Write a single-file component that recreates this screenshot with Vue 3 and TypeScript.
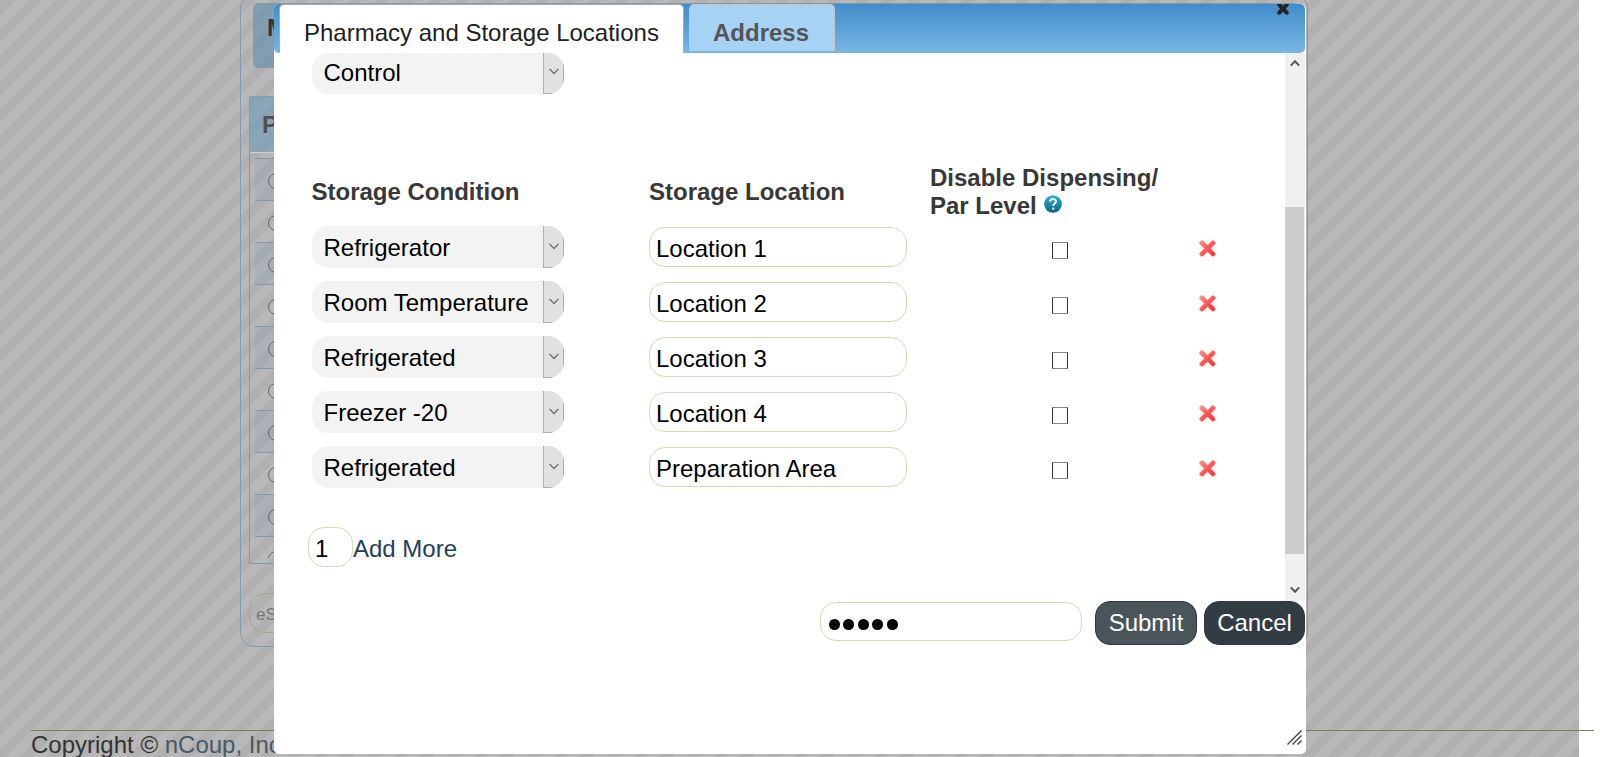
<script setup lang="ts">
import { ref } from 'vue'

interface StorageRow {
  condition: string
  location: string
}

const rows = ref<StorageRow[]>([
  { condition: 'Refrigerator', location: 'Location 1' },
  { condition: 'Room Temperature', location: 'Location 2' },
  { condition: 'Refrigerated', location: 'Location 3' },
  { condition: 'Freezer -20', location: 'Location 4' },
  { condition: 'Refrigerated', location: 'Preparation Area' },
])
const addCount = ref('1')
const removeRow = (index: number) => rows.value.splice(index, 1)
</script>

<template>
  <div class="page">
    <div class="backdrop"></div>

    <section class="panel">
      <h1 class="panel-title">M</h1>
      <div class="list">
        <div class="list-head">P</div>
        <div class="list-body">
          <div v-for="n in 10" :key="n" class="list-row"><span class="radio"></span></div>
        </div>
      </div>
      <div class="sign">eS</div>
    </section>

    <footer class="footer">Copyright © <a>nCoup, Inc</a></footer>

    <div class="dialog">
      <header class="tabs">
        <div class="tab active">Pharmacy and Storage Locations</div>
        <div class="tab">Address</div>
        <svg class="close" width="12" height="11" viewBox="0 0 12 11">
          <path d="M2.3 .8L9.7 8.7M9.7 .8L2.3 8.7" stroke="#222" stroke-width="4" stroke-linecap="round" />
        </svg>
      </header>

      <div class="body">
        <div class="content">
          <div class="select">
            <span class="value">Control</span>
            <span class="arrow"><svg width="10" height="7" viewBox="0 0 10 7"><path d="M.6 1L5 5.5L9.4 1" /></svg></span>
          </div>

          <div class="grid head">
            <div>Storage Condition</div>
            <div>Storage Location</div>
            <div>
              Disable Dispensing/<br />Par Level
              <svg class="help" width="18" height="18" viewBox="0 0 18 18">
                <defs>
                  <linearGradient id="helpFill" x1="0" y1="0" x2="0" y2="1">
                    <stop offset="0" stop-color="#2db2d8" />
                    <stop offset="1" stop-color="#0b6084" />
                  </linearGradient>
                </defs>
                <circle cx="9" cy="9" r="8.8" fill="url(#helpFill)" />
                <path d="M6 6.6C6.2 3.3 12 3.3 12 6.5C12 8.6 9.2 8.6 9.2 11" fill="none" stroke="#fff" stroke-width="2" />
                <circle cx="9.2" cy="13.6" r="1.2" fill="#fff" />
              </svg>
            </div>
          </div>

          <div v-for="(row, i) in rows" :key="i" class="grid row">
            <div class="select">
              <span class="value">{{ row.condition }}</span>
              <span class="arrow"><svg width="10" height="7" viewBox="0 0 10 7"><path d="M.6 1L5 5.5L9.4 1" /></svg></span>
            </div>
            <input v-model="row.location" class="field location" type="text" />
            <span class="check"></span>
            <svg class="remove" width="17" height="17" viewBox="0 0 17 17" @click="removeRow(i)">
              <defs>
                <linearGradient id="crossFill" gradientUnits="userSpaceOnUse" x1="0" y1="0" x2="17" y2="17">
                  <stop offset="0" stop-color="#ff9a9a" />
                  <stop offset=".5" stop-color="#fa5558" />
                  <stop offset="1" stop-color="#f22a30" />
                </linearGradient>
              </defs>
              <path d="M3 3L14 14M14 3L3 14" stroke="#ff8c8c" stroke-width="5.2" stroke-linecap="round" />
              <path d="M3 3L14 14M14 3L3 14" stroke="url(#crossFill)" stroke-width="3.8" stroke-linecap="round" />
            </svg>
          </div>

          <div class="add">
            <input v-model="addCount" class="field count" type="text" /><a>Add More</a>
          </div>
        </div>

        <div class="scrollbar">
          <svg width="10" height="8" viewBox="0 0 10 8"><path d="M.8 6.6L5 2.2L9.2 6.6" /></svg>
          <div class="thumb"></div>
          <svg width="10" height="8" viewBox="0 0 10 8"><path d="M.8 1.4L5 5.8L9.2 1.4" /></svg>
        </div>
      </div>

      <div class="actions">
        <div class="field password"><i v-for="n in 5" :key="n"></i></div>
        <button class="submit">Submit</button>
        <button class="cancel">Cancel</button>
      </div>

      <svg class="grip" width="15" height="15" viewBox="0 0 15 15">
        <path d="M.5 14.5L14.5 .5M5.5 14.5L14.5 5.5M10.5 14.5L14.5 10.5" stroke="#444" stroke-width="1.4" />
      </svg>
    </div>
  </div>
</template>

<style>
body {
  overflow: hidden;
}
</style>

<style scoped>
* {
  box-sizing: border-box;
}
.page {
  position: relative;
  width: 1600px;
  height: 757px;
  overflow: hidden;
  background: #fff;
  color: #333;
  font: 24px/28px "Liberation Sans", Arial, sans-serif;
}
.backdrop {
  position: absolute;
  inset: 0 21px 0 0;
  background: repeating-linear-gradient(135deg, #b8b8b8 0 1.6px, #b0b0b0 2.8px 10.4px, #b8b8b8 11.6px 18.86px);
}
.panel {
  position: absolute;
  left: 240px;
  top: -6px;
  width: 1068px;
  height: 653px;
  padding: 9px 8px 0;
  border: 1px solid #7f9bae;
  border-radius: 14px;
}
.panel-title {
  width: 1046px;
  height: 65px;
  margin: -1px 0 28px 4px;
  padding: 11px 14px;
  border-radius: 5px;
  background: rgba(85, 135, 170, 0.52);
  font-size: 24px;
}
.list {
  height: 468px;
  overflow: hidden;
  border: 1px solid #7f9bae;
}
.list-head {
  height: 56px;
  padding: 14px 12px;
  background: rgba(90, 145, 185, 0.48);
  border-bottom: 1px solid #d0d0d0;
  color: #505050;
  font-weight: bold;
}
.list-body {
  height: 405px;
  padding: 5px;
  overflow: hidden;
}
.list-row {
  height: 42px;
  padding: 14px 13px;
  border-top: 1px solid #7f9bae;
}
.list-row:nth-child(odd) {
  background: rgba(140, 165, 180, 0.32);
}
.radio {
  display: block;
  width: 16px;
  height: 16px;
  border: 1px solid #666;
  border-radius: 50%;
}
.sign {
  height: 40px;
  margin-top: 29px;
  padding: 7px 6px;
  border: 1px solid #a5a68e;
  border-radius: 16px;
  color: #777;
  font-size: 17px;
}
.footer {
  position: absolute;
  left: 31px;
  right: 6px;
  top: 730px;
  border-top: 1px solid #7b7d5b;
}
.footer a {
  color: #485965;
}
.dialog {
  position: absolute;
  left: 274px;
  top: 4px;
  width: 1032px;
  height: 750px;
  padding-right: 1px;
  border-radius: 5px;
  background: #fff;
}
.tabs {
  position: relative;
  display: flex;
  gap: 5px;
  height: 49px;
  padding-left: 5px;
  border-radius: 5px;
  background: linear-gradient(#418dc9, #78b5e3);
}
.tab {
  height: 47px;
  padding: 14px 25px 0 23px;
  border: 1px solid #c5c5c5;
  border-bottom: 0;
  border-radius: 5px 5px 0 0;
  background: #a6d2f4;
  color: #555;
  font-weight: bold;
}
.tab.active {
  width: 405px;
  height: 49px;
  padding: 14px 0 0 24px;
  border-color: #aaa;
  background: #fff;
  color: #212121;
  font-weight: normal;
  white-space: nowrap;
}
.close {
  position: absolute;
  right: 16px;
  top: 0;
}
.body {
  display: flex;
  height: 548px;
}
.content {
  flex: 1;
  padding-left: 38px;
}
.select {
  display: flex;
  width: 252px;
  height: 42px;
  border-radius: 16px;
  overflow: hidden;
  background: #f3f3f3;
  color: #000;
}
.content > .select {
  height: 41px;
}
.value {
  flex: 1;
  padding: 8px 0 0 11.5px;
  white-space: nowrap;
}
.content > .select .value {
  padding-top: 6px;
}
.arrow {
  display: flex;
  justify-content: center;
  width: 21px;
  padding-top: 16.5px;
  border: 1px solid #adadad;
  border-width: 0 1px 1px;
  background: #e1e1e1;
}
.content > .select .arrow {
  padding-top: 15px;
}
.arrow svg {
  fill: none;
  stroke: #707070;
  stroke-width: 1.3;
}
.grid {
  display: grid;
  grid-template-columns: 337px 281px 239px 60px;
  align-items: center;
}
.head {
  margin-top: 70px;
  color: #383838;
  font-weight: bold;
  white-space: nowrap;
}
.head > :first-child {
  margin-left: -0.5px;
}
.help {
  margin-left: 1px;
  vertical-align: 1px;
}
.row {
  height: 55px;
}
.row .select {
  margin-top: -1px;
}
.field {
  height: 40px;
  margin: 0;
  padding: 4px 6px 0;
  border: 1px solid #d8d9b8;
  border-radius: 16px;
  background: #fff;
  color: #000;
  font: inherit;
}
.location {
  width: 258px;
  margin-top: -1px;
}
.check {
  width: 16px;
  height: 17px;
  margin: 6px 0 0 122px;
  border: 1px solid #333;
  border-top-color: #888;
  border-bottom-color: #888;
}
.remove {
  margin: 1px 0 0 30px;
}
.add {
  display: flex;
  align-items: center;
  margin: 32px 0 0 -4px;
}
.count {
  width: 45px;
}
.add a {
  margin-top: 3px;
  color: #254056;
}
.scrollbar {
  display: flex;
  flex-direction: column;
  align-items: center;
  width: 20px;
  padding: 6px 1px 7px 0;
  background: #f0f0f0;
}
.scrollbar svg {
  fill: none;
  stroke: #555;
  stroke-width: 2;
}
.thumb {
  width: 19px;
  height: 347px;
  margin: 140px 0 auto;
  background: #cdcdcd;
}
.actions {
  display: flex;
  justify-content: flex-end;
}
.password {
  display: flex;
  gap: 3.9px;
  width: 262px;
  height: 39px;
  margin: 1px 13px 0 0;
  padding: 16px 8px 0;
}
.password i {
  width: 10.6px;
  height: 10.6px;
  border-radius: 50%;
  background: #000;
}
button {
  width: 102px;
  height: 44px;
  margin: 0;
  padding: 0;
  border: 1px solid #2b3940;
  border-radius: 15px;
  background: #4a5559;
  color: #fff;
  font: inherit;
}
.cancel {
  width: 101px;
  margin-left: 7px;
  background: #323d43;
}
.grip {
  position: absolute;
  right: 4px;
  bottom: 9px;
}
</style>
